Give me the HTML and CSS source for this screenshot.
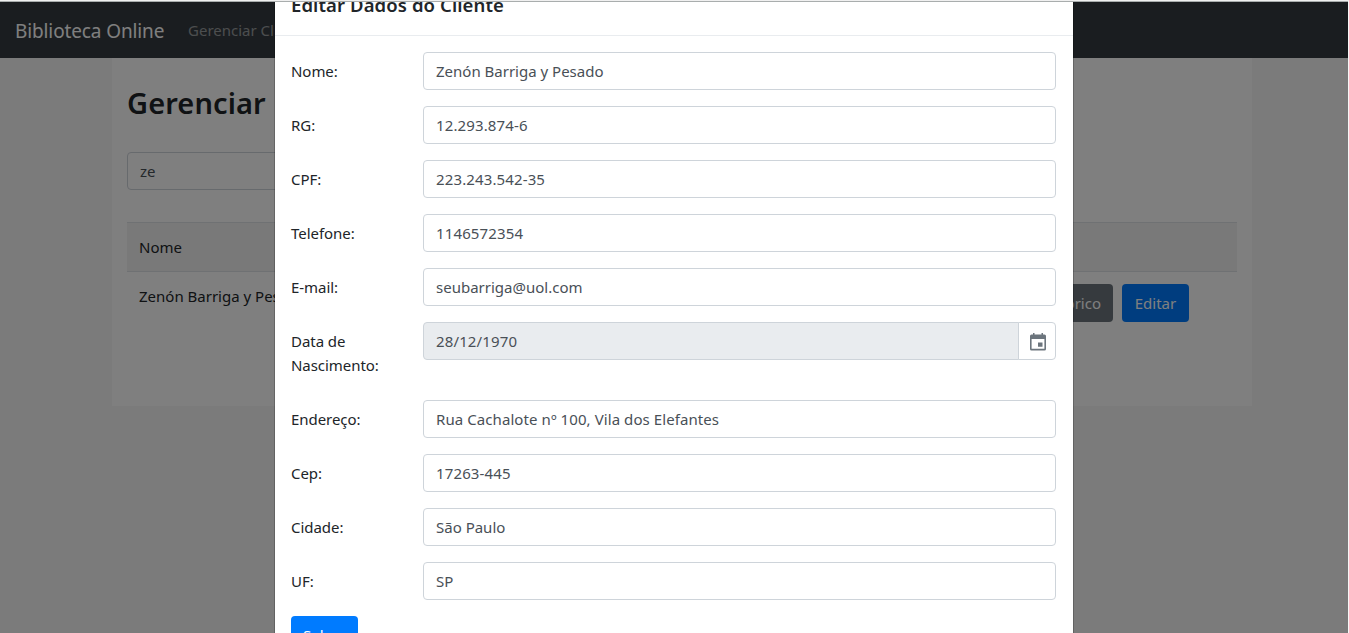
FILE: index.html
```
<!DOCTYPE html>
<html lang="pt-br">
<head>
<meta charset="utf-8">
<title>Biblioteca Online</title>
<link rel="stylesheet" href="styles.css">
</head>
<body>
<div class="screen">
  <nav class="navbar">
    <a class="brand"><span>Biblioteca Online</span></a>
    <a class="nav-link"><span>Gerenciar Clientes</span></a>
  </nav>
  <main class="container">
    <h2 class="page-title">Gerenciar Clientes</h2>
    <div class="control search">ze</div>
    <div class="table">
      <div class="table-head">Nome</div>
      <div class="table-row">
        <span class="client">Zenón Barriga y Pesado</span>
        <span class="actions"><a class="btn secondary">Histórico</a><a class="btn primary">Editar</a></span>
      </div>
    </div>
  </main>
  <div class="backdrop"></div>
  <section class="modal">
    <header class="modal-header"><h5 class="modal-title">Editar Dados do Cliente</h5></header>
    <form class="modal-body">
      <div class="row"><label>Nome:</label><div class="control">Zenón Barriga y Pesado</div></div>
      <div class="row"><label>RG:</label><div class="control num">12.293.874-6</div></div>
      <div class="row"><label>CPF:</label><div class="control num">223.243.542-35</div></div>
      <div class="row"><label>Telefone:</label><div class="control num">1146572354</div></div>
      <div class="row"><label>E-mail:</label><div class="control">seubarriga@uol.com</div></div>
      <div class="row"><label>Data de Nascimento:</label>
        <div class="input-group">
          <div class="control date num">28/12/1970</div>
          <div class="calendar"><svg width="16" height="18" viewBox="0 0 16 18"><path fill="#6c757d" fill-rule="evenodd" d="M3 0h1.500v1.500h7V0H13v1.500h1.500Q16 1.500 16 3V16q0 1.500-1.500 1.500h-13Q0 17.500 0 16V3Q0 1.500 1.500 1.500H3zM1.600 6v9.800h12.800V6zM8 9.500h4.500v4.300H8z"/></svg></div>
        </div>
      </div>
      <div class="row"><label>Endereço:</label><div class="control address">Rua Cachalote nº 100, Vila dos Elefantes</div></div>
      <div class="row"><label>Cep:</label><div class="control num">17263-445</div></div>
      <div class="row"><label>Cidade:</label><div class="control">São Paulo</div></div>
      <div class="row"><label>UF:</label><div class="control">SP</div></div>
      <a class="btn primary">Salvar</a>
    </form>
  </section>
</div>
</body>
</html>
```
FILE: styles.css
```
* { box-sizing: border-box; }
html { height: 100%; overflow: hidden; background: #f7f7f7; }
body {
  margin: 0;
  height: 100%;
  overflow: hidden;
  background: #f7f7f7;
  border-top: 1px solid #f0f0f0;
  font: 15px/24px "Noto Sans", "Open Sans", sans-serif;
  color: #212529;
}
.screen {
  position: relative;
  height: 632px;
  width: 1348px;
  border-top: 1px solid #a9adad;
  overflow: hidden;
}
.navbar {
  display: flex;
  align-items: center;
  height: 56px;
  padding: 0 15px;
  background: #343a40;
  white-space: nowrap;
}
.brand { width: 173px; padding-top: 2px; font-size: 19px; letter-spacing: -.12px; color: #fff; }
.nav-link { color: rgba(255, 255, 255, .5); }
.container {
  width: 1140px;
  height: 348px;
  margin: 0 auto 0 112px;
  padding: 26px 15px 0;
  background: #fff;
}
.page-title {
  margin: 0 0 31px;
  font-size: 29px;
  line-height: 37px;
  font-weight: 600;
  letter-spacing: .1px;
  word-spacing: 3px;
}
.control {
  flex: 1;
  height: 38px;
  padding: 6px 12px;
  border: 1px solid #ced4da;
  border-radius: 4px;
  background: #fff;
  color: #495057;
  white-space: nowrap;
}
.num { letter-spacing: .13px; }
.address { letter-spacing: .08px; }
.search { width: 400px; }
.table { margin-top: 32px; }
.table-head {
  height: 50px;
  padding: 12px;
  background: #f2f2f2;
  border: solid #dee2e6;
  border-width: 1px 0;
}
.table-row { display: flex; justify-content: space-between; padding: 12px 48px 0 12px; }
.actions { display: flex; gap: 9px; }
.btn {
  display: inline-block;
  height: 38px;
  padding: 7px 12px;
  border-radius: 4px;
  color: #fff;
  text-align: center;
}
.primary { width: 67px; background: #007bff; }
.secondary { background: #6c757d; }
.backdrop { position: absolute; inset: 0; background: rgba(0, 0, 0, .5); }
.modal {
  position: absolute;
  top: -32px;
  left: 274px;
  width: 800px;
  height: 760px;
  background: #fff;
  background-clip: padding-box;
  border: 1px solid rgba(0, 0, 0, .2);
}
.modal-header { height: 65px; padding: 19px 16px; border-bottom: 1px solid #e9ecef; }
.modal-title { margin: 0; font-size: 18.500px; line-height: 30px; font-weight: 600; letter-spacing: .1px; }
.modal-body { padding: 16px; }
.row { display: flex; align-items: flex-start; margin-bottom: 16px; }
.row label { width: 132px; padding: 7px 30px 7px 0; letter-spacing: -.05px; }
.row > .control, .input-group { margin-right: 1px; }
.input-group { display: flex; flex: 1; }
.date { background: #e9ecef; border-radius: 4px 0 0 4px; }
.calendar {
  display: flex;
  align-items: center;
  justify-content: center;
  width: 38px;
  height: 38px;
  margin-left: -1px;
  padding: 1px 0 0 2px;
  border: 1px solid #ced4da;
  border-radius: 0 4px 4px 0;
  background: #fff;
}
```
